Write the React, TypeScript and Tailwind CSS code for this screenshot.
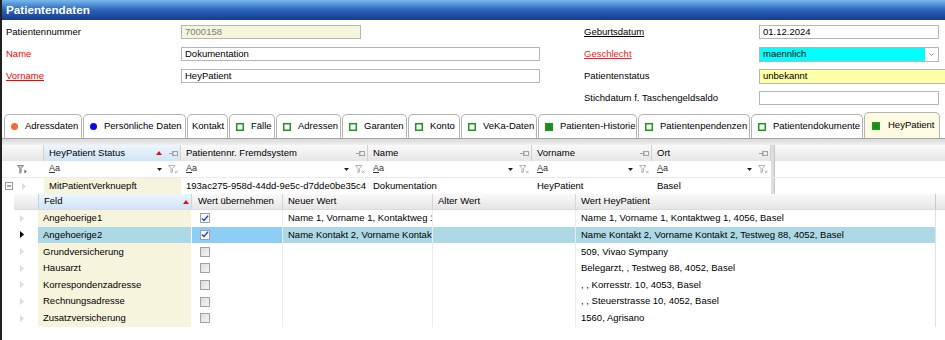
import React from "react";

const font = "font-['Liberation_Sans',Arial,sans-serif]";

function Pin() {
  return (
    <svg width="9" height="7" viewBox="0 0 9 7" className="shrink-0">
      <path d="M0 3.5h3.5M3.5 1v5" stroke="#a3a3a3" strokeWidth="1" />
      <rect x="4" y="1.5" width="4.5" height="4" fill="none" stroke="#a3a3a3" strokeWidth="1" />
    </svg>
  );
}

function SortUp() {
  return (
    <svg width="6" height="4" viewBox="0 0 6 4" className="shrink-0">
      <path d="M0 4L3 0L6 4Z" fill="#e01010" />
    </svg>
  );
}

function DropArrow() {
  return (
    <svg width="5" height="3" viewBox="0 0 5 3" className="shrink-0">
      <path d="M0 0H5L2.5 3Z" fill="#222" />
    </svg>
  );
}

function ClearFilter() {
  return (
    <svg width="10" height="9" viewBox="0 0 10 9" className="shrink-0">
      <path d="M0.5 0.5h6.5l-2.5 3v3.5l-1.5 1v-4.5z" fill="none" stroke="#b4b4b4" strokeWidth="1" />
      <path d="M7 5.5l2.5 2.5M9.5 5.5L7 8" stroke="#b4b4b4" strokeWidth="1" />
    </svg>
  );
}

function FilterIcon() {
  return (
    <svg width="10" height="9" viewBox="0 0 10 9" className="shrink-0">
      <path d="M0.5 0.5h6l-2.3 3v3.8l-1.4 1v-4.8z" fill="#c8c8c8" stroke="#8a8a8a" strokeWidth="1" />
      <path d="M7.5 4.5v4l2.2-2z" fill="#555" />
    </svg>
  );
}

function RowArrow({ active }: { active?: boolean }) {
  return (
    <svg width="4" height="7" viewBox="0 0 4 7" className="shrink-0">
      <path d="M0 0L4 3.5L0 7Z" fill={active ? "#000" : "#dcdcdc"} />
    </svg>
  );
}

function Collapse() {
  return (
    <svg width="8" height="8" viewBox="0 0 8 8" className="shrink-0">
      <rect x="0.5" y="0.5" width="7" height="7" fill="#fff" stroke="#9a9a9a" />
      <path d="M2 4h4" stroke="#555" />
    </svg>
  );
}

function CheckBox({ checked }: { checked?: boolean }) {
  return (
    <div
      className={[
        "w-[10px] h-[10px] border border-[#a2a2a2] flex items-center justify-center",
        checked ? "bg-[#f4f6fa]" : "bg-gradient-to-br from-[#dcdcdc] to-[#f6f6f6]",
      ].join(" ")}
    >
      {checked && (
        <svg width="8" height="7" viewBox="0 0 8 7">
          <path d="M1 3.5L3 5.5L7 0.8" fill="none" stroke="#2a4da8" strokeWidth="1.4" />
        </svg>
      )}
    </div>
  );
}

function Square({ filled }: { filled?: boolean }) {
  return (
    <svg width="8" height="8" viewBox="0 0 8 8" className="shrink-0">
      <rect
        x="0.75"
        y="0.75"
        width="6.5"
        height="6.5"
        fill={filled ? "#1c8c1c" : "#fff"}
        stroke="#1c9a1c"
        strokeWidth="1.5"
      />
    </svg>
  );
}

const tabs: { label: string; w: string; icon: string }[] = [
  { label: "Adressdaten", w: "w-[78px]", icon: "orange" },
  { label: "Persönliche Daten", w: "w-[103px]", icon: "blue" },
  { label: "Kontakt", w: "w-[41px]", icon: "none" },
  { label: "Fälle", w: "w-[46px]", icon: "sq" },
  { label: "Adressen", w: "w-[65px]", icon: "sq" },
  { label: "Garanten", w: "w-[65px]", icon: "sq" },
  { label: "Konto", w: "w-[52px]", icon: "sq" },
  { label: "VeKa-Daten", w: "w-[76px]", icon: "sq" },
  { label: "Patienten-Historie", w: "w-[99px]", icon: "fill" },
  { label: "Patientenpendenzen", w: "w-[112px]", icon: "sq" },
  { label: "Patientendokumente", w: "w-[112px]", icon: "sq" },
];

const mainCols = [
  { w: "w-[137px]", label: "HeyPatient Status", sorted: true, value: "MitPatientVerknuepft" },
  { w: "w-[187px]", label: "Patientennr. Fremdsystem", value: "193ac275-958d-44dd-9e5c-d7dde0be35c4" },
  { w: "w-[164px]", label: "Name", value: "Dokumentation" },
  { w: "w-[120px]", label: "Vorname", value: "HeyPatient" },
  { w: "w-[119px]", label: "Ort", value: "Basel" },
];

const rows = [
  { feld: "Angehoerige1", checked: true, neu: "Name 1, Vorname 1, Kontaktweg 1, 4056, Basel", hey: "Name 1, Vorname 1, Kontaktweg 1, 4056, Basel" },
  { feld: "Angehoerige2", checked: true, neu: "Name Kontakt 2, Vorname Kontakt 2, Testweg 88, 4052, Basel", hey: "Name Kontakt 2, Vorname Kontakt 2, Testweg 88, 4052, Basel", selected: true },
  { feld: "Grundversicherung", hey: "509, Vivao Sympany" },
  { feld: "Hausarzt", hey: "Belegarzt, , Testweg 88, 4052, Basel" },
  { feld: "Korrespondenzadresse", hey: ", , Korresstr. 10, 4053, Basel" },
  { feld: "Rechnungsadresse", hey: ", , Steuerstrasse 10, 4052, Basel" },
  { feld: "Zusatzversicherung", hey: "1560, Agrisano" },
];

const headGray = "bg-gradient-to-b from-[#fafafa] to-[#e6e6e6]";
const headBlue = "bg-gradient-to-b from-[#eef6fc] to-[#cfe5f6]";
const input = "shrink-0 h-[14px] border border-[#b6b6b6] px-[3px] flex items-center leading-none";

export default function App() {
  return (
    <div className={`w-[945px] h-[340px] overflow-hidden bg-white border-l-2 border-[#202020] text-[9.5px] text-black ${font}`}>
      {/* Title bar */}
      <div className="h-[20px] bg-gradient-to-b from-[#78b8ea] via-[#2c64be] to-[#173a8c] flex items-center pl-[4px]">
        <span className="text-white font-bold text-[11.7px]">Patientendaten</span>
      </div>

      {/* Form */}
      <div className="pt-[1px]">
        <div className="flex h-[22px] items-center">
          <div className="w-[179px] shrink-0 pl-[4px]">Patientennummer</div>
          <div className="w-[403px] shrink-0">
            <div className={`${input} w-[180px] bg-[#f5f5dc] text-[#808080]`}>7000158</div>
          </div>
          <div className="w-[175px] shrink-0 underline">Geburtsdatum</div>
          <div className={`${input} w-[180px]`}>01.12.2024</div>
        </div>
        <div className="flex h-[22px] items-center">
          <div className="w-[179px] shrink-0 pl-[4px] text-[#ff0000]">Name</div>
          <div className="w-[403px] shrink-0">
            <div className={`${input} w-[359px]`}>Dokumentation</div>
          </div>
          <div className="w-[175px] shrink-0 underline text-[#ff2020]">Geschlecht</div>
          <div className="shrink-0 flex w-[180px] h-[15px] border border-[#b6b6b6]">
            <div className="flex-1 bg-[#00ffff] px-[3px] flex items-center">maennlich</div>
            <div className="w-[13px] bg-white flex items-center justify-center">
              <svg width="5" height="3" viewBox="0 0 5 3">
                <path d="M0.5 0.5L2.5 2.5L4.5 0.5" fill="none" stroke="#888" />
              </svg>
            </div>
          </div>
        </div>
        <div className="flex h-[22px] items-center">
          <div className="w-[179px] shrink-0 pl-[4px] text-[#ff0000] underline">Vorname</div>
          <div className="w-[403px] shrink-0">
            <div className={`${input} w-[359px]`}>HeyPatient</div>
          </div>
          <div className="w-[175px] shrink-0">Patientenstatus</div>
          <div className={`${input} h-[15px] w-[190px] bg-[#ffffa6]`}>unbekannt</div>
        </div>
        <div className="flex h-[22px] items-center">
          <div className="w-[582px] shrink-0" />
          <div className="w-[175px] shrink-0">Stichdatum f. Taschengeldsaldo</div>
          <div className={`${input} w-[180px]`} />
        </div>
      </div>

      {/* Tabs */}
      <div className="mt-[3px] h-[26px] flex items-end pl-[2px]">
        {tabs.map((t) => (
          <div
            key={t.label}
            className={[
              t.w,
              "shrink-0 h-[24px] mr-[1px] bg-white border border-b-0 border-[#b4b4b4] rounded-t-[5px] flex items-center whitespace-nowrap",
              t.icon === "none" ? "pl-[4px]" : "pl-[6px] gap-[7px]",
            ].join(" ")}
          >
            {t.icon === "orange" && <span className="w-[7px] h-[7px] rounded-full bg-[#f26b36] shrink-0" />}
            {t.icon === "blue" && <span className="w-[7px] h-[7px] rounded-full bg-[#0a0ae6] shrink-0" />}
            {t.icon === "sq" && <Square />}
            {t.icon === "fill" && <Square filled />}
            <span>{t.label}</span>
          </div>
        ))}
        <div className="shrink-0 w-[76px] h-[26px] bg-[#fffbe2] border border-b-0 border-[#b4b4b4] rounded-t-[5px] flex items-center pl-[7px] gap-[8px] whitespace-nowrap">
          <Square filled />
          <span>HeyPatient</span>
        </div>
      </div>
      <div className="h-[7px] border-t border-[#a4a4a4] bg-gradient-to-b from-[#d9d9d9] to-[#f0f0f0]" />

      {/* Main grid header */}
      <div className="flex h-[16px]">
        <div className={`w-[42px] shrink-0 ${headGray} border-r border-[#d2d2d2]`} />
        {mainCols.map((c) => (
          <div
            key={c.label}
            className={[
              c.w,
              c.sorted ? headBlue : headGray,
              "shrink-0 flex items-center pl-[5px] pr-[2px] border-r border-[#d2d2d2] whitespace-nowrap overflow-hidden",
            ].join(" ")}
          >
            <span>{c.label}</span>
            <span className="ml-auto flex items-center gap-[7px]">
              {c.sorted && <SortUp />}
              <Pin />
            </span>
          </div>
        ))}
        <div className="w-[4px] shrink-0 bg-[#dedede] border-r border-[#c4c4c4]" />
        <div className={`flex-1 ${headGray}`} />
      </div>

      {/* Filter row */}
      <div className="flex h-[17px] border-b border-[#ececec]">
        <div className="w-[42px] shrink-0 flex items-center justify-end pr-[17px]">
          <FilterIcon />
        </div>
        {mainCols.map((c) => (
          <div key={c.label} className={`${c.w} shrink-0 flex items-center pl-[5px] pr-[3px]`}>
            <span className="text-[9px] text-[#333]">
              <span className="underline">A</span>a
            </span>
            <span className="ml-auto flex items-center gap-[6px]">
              <DropArrow />
              <ClearFilter />
            </span>
          </div>
        ))}
        <div className="w-[4px] shrink-0 bg-[#dedede] border-r border-[#c4c4c4]" />
        <div className="flex-1" />
      </div>

      {/* Data row */}
      <div className="flex h-[16px]">
        <div className="w-[42px] shrink-0 flex items-center pl-[3px] gap-[9px]">
          <Collapse />
          <RowArrow />
        </div>
        {mainCols.map((c) => (
          <div
            key={c.label}
            className={[
              c.w,
              c.sorted ? "bg-[#f6f4dc]" : "",
              "shrink-0 flex items-center pl-[5px] whitespace-nowrap overflow-hidden",
            ].join(" ")}
          >
            {c.value}
          </div>
        ))}
        <div className="w-[4px] shrink-0 bg-[#dedede] border-r border-[#c4c4c4]" />
        <div className="flex-1" />
      </div>

      {/* Child band header */}
      <div className="flex h-[16px] ml-[12px] border-b border-[#dcdcdc]">
        <div className={`w-[24px] shrink-0 ${headGray}`} />
        <div className={`w-[153px] shrink-0 ${headBlue} flex items-center pl-[5px] pr-[2px] border-l border-[#b9d4ea]`}>
          <span>Feld</span>
          <span className="ml-auto">
            <SortUp />
          </span>
        </div>
        <div className={`w-[91px] shrink-0 ${headGray} flex items-center pl-[6px] border-l border-[#d6d6d6]`}>Wert übernehmen</div>
        <div className={`w-[150px] shrink-0 ${headGray} flex items-center pl-[5px] border-l border-[#d6d6d6]`}>Neuer Wert</div>
        <div className={`w-[143px] shrink-0 ${headGray} flex items-center pl-[5px] border-l border-[#d6d6d6]`}>Alter Wert</div>
        <div className={`w-[360px] shrink-0 ${headGray} flex items-center pl-[5px] border-l border-[#d6d6d6]`}>Wert HeyPatient</div>
        <div className={`flex-1 ${headGray} border-l border-[#c8c8c8]`} />
      </div>

      {/* Child rows */}
      {rows.map((r) => (
        <div key={r.feld} className="flex h-[16.67px] ml-[12px] whitespace-nowrap">
          <div className="w-[24px] shrink-0 flex items-center pl-[6px]">
            <RowArrow active={r.selected} />
          </div>
          <div className={`w-[153px] shrink-0 flex items-center pl-[5px] ${r.selected ? "bg-[#add8e6]" : "bg-[#f6f4dc]"}`}>{r.feld}</div>
          <div className={`w-[91px] shrink-0 flex items-center pl-[8px] border-l border-white ${r.selected ? "bg-[#8dcdf6]" : ""}`}>
            <CheckBox checked={r.checked} />
          </div>
          <div className={`w-[150px] shrink-0 flex items-center pl-[5px] overflow-hidden border-l border-[#ececec] ${r.selected ? "bg-[#add8e6]" : ""}`}>
            {r.neu ?? ""}
          </div>
          <div className={`w-[143px] shrink-0 border-l border-[#ececec] ${r.selected ? "bg-[#add8e6]" : ""}`} />
          <div className={`w-[360px] shrink-0 flex items-center pl-[5px] overflow-hidden border-l border-[#ececec] ${r.selected ? "bg-[#add8e6]" : ""}`}>
            {r.hey}
          </div>
          <div className="flex-1 border-l border-[#e2e2e2]" />
        </div>
      ))}
    </div>
  );
}
